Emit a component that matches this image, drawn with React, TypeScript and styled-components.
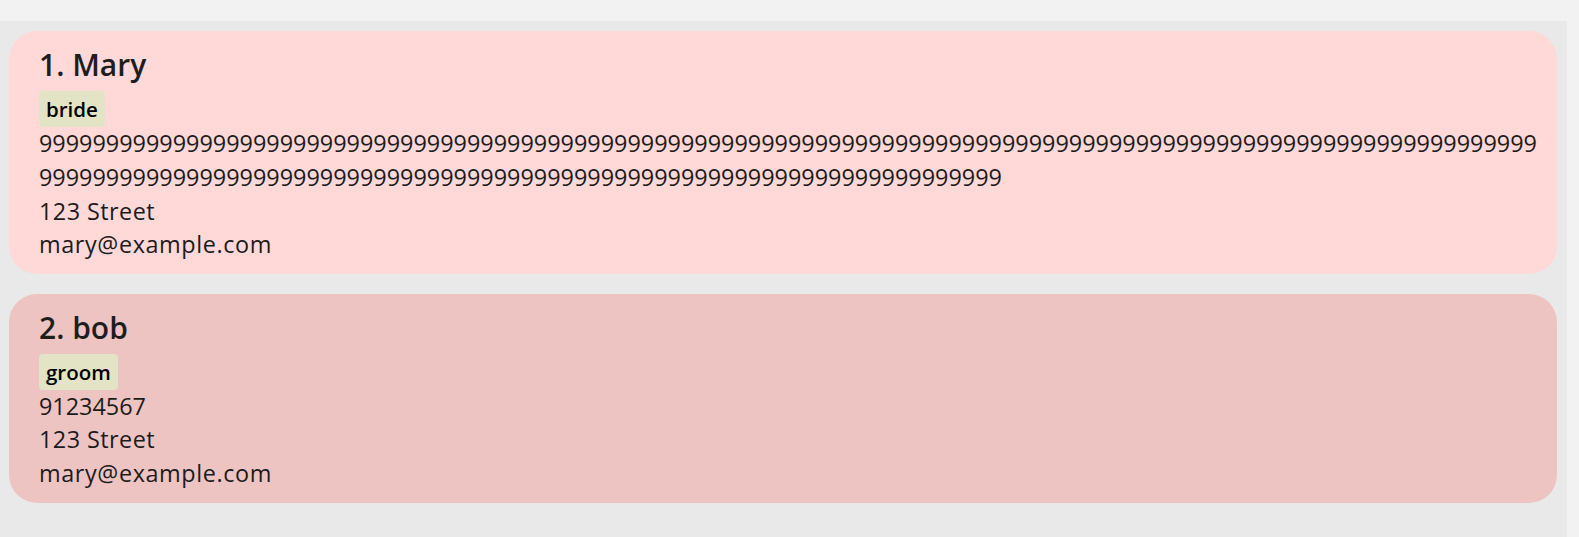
import React from "react";
import styled, { createGlobalStyle } from "styled-components";

const GlobalStyle = createGlobalStyle`
  html, body {
    margin: 0;
    padding: 0;
    background: #f2f2f2;
    font-family: "Open Sans", "Noto Sans", "Liberation Sans", sans-serif;
  }
  * { box-sizing: border-box; }
`;

const Page = styled.div`
  width: 1579px;
  height: 537px;
  padding-top: 21px;
  background: #f2f2f2;
  display: flex;
  overflow: hidden;
`;

const ListPanel = styled.div`
  width: 1567px;
  height: 516px;
  background: #e9e9e9;
  padding: 10px 10px 0 9px;
  display: flex;
  flex-direction: column;
  gap: 20px;
`;

const Card = styled.div<{ $bg: string }>`
  background: ${(p) => p.$bg};
  border-radius: 28px;
  padding: 14px 14px 11.5px 30px;
  display: flex;
  flex-direction: column;
  align-items: flex-start;
  color: #1c1c1c;
`;

const Name = styled.div`
  font-size: 30px;
  font-weight: 600;
  line-height: 40px;
  color: #1e1e1e;
`;

const Tags = styled.div`
  display: flex;
  gap: 6px;
  margin-top: 6px;
`;

const Tag = styled.span`
  background: #e3e3c5;
  color: #000;
  font-size: 20.5px;
  font-weight: 600;
  line-height: 28px;
  padding: 4px 7px;
  border-radius: 4px;
`;

const Field = styled.div<{ $spacing?: number }>`
  font-size: 23.4px;
  line-height: 33.8px;
  width: 100%;
  word-break: break-all;
  letter-spacing: ${(p) => p.$spacing ?? 0}px;
`;

type Person = {
  name: string;
  tags: string[];
  phone: string;
  address: string;
  email: string;
  bg: string;
};

const people: Person[] = [
  {
    name: "Mary",
    tags: ["bride"],
    phone: "9".repeat(184),
    address: "123 Street",
    email: "mary@example.com",
    bg: "#ffd8d8",
  },
  {
    name: "bob",
    tags: ["groom"],
    phone: "91234567",
    address: "123 Street",
    email: "mary@example.com",
    bg: "#eec4c3",
  },
];

export default function App() {
  return (
    <>
      <GlobalStyle />
      <Page>
        <ListPanel>
          {people.map((p, i) => (
            <Card key={i} $bg={p.bg}>
              <Name>
                {i + 1}. {p.name}
              </Name>
              <Tags>
                {p.tags.map((t) => (
                  <Tag key={t}>{t}</Tag>
                ))}
              </Tags>
              <Field>{p.phone}</Field>
              <Field $spacing={0.45}>{p.address}</Field>
              <Field $spacing={0.6}>{p.email}</Field>
            </Card>
          ))}
        </ListPanel>
      </Page>
    </>
  );
}
